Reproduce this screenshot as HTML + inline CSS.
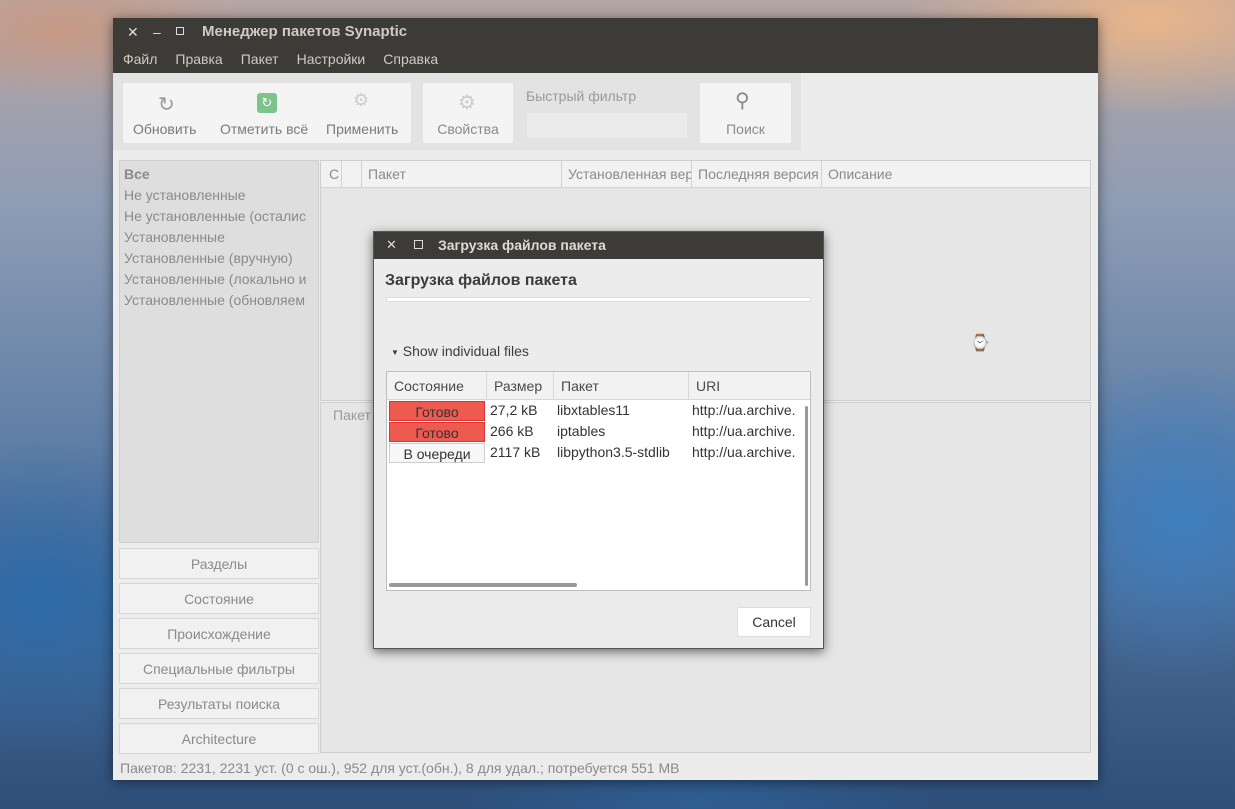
<!DOCTYPE html><html><head><meta charset="utf-8"><style>
*{box-sizing:border-box;margin:0;padding:0}
body{width:1235px;height:809px;overflow:hidden;position:relative;font-family:"Liberation Sans","DejaVu Sans",sans-serif;font-size:14px;color:#7a7a7a;
background:
radial-gradient(ellipse 300px 120px at 1150px 20px,#e9b58a 0%,transparent 80%),
radial-gradient(ellipse 200px 80px at 60px 30px,#c89a86 0%,transparent 90%),
radial-gradient(ellipse 250px 200px at 40px 600px,#2c6aa8 0%,transparent 80%),
radial-gradient(ellipse 200px 200px at 1180px 520px,#3e7fbf 0%,transparent 80%),
radial-gradient(ellipse 300px 120px at 700px 800px,#2f5e93 0%,transparent 80%),
linear-gradient(180deg,#b7a6a3 0%,#8f9db5 25%,#5f7ea6 55%,#2e4f7a 100%)}
.abs{position:absolute}
.win{left:113px;top:18px;width:985px;height:762px;background:#ececec;box-shadow:0 2px 12px rgba(0,0,0,.5)}
.tb{left:0;top:0;width:985px;height:55px;background:#3c3b37;color:#dfdbd2}
.menu span{margin-right:18px}
.btn{background:#f4f4f4;border-radius:2px;text-align:center;color:#8a8a8a}
.side{background:#dedede;border:1px solid #cfcfcf}
.sb{left:6px;width:200px;height:31px;background:#f1f1f1;border:1px solid #d6d6d6;text-align:center;line-height:30px;color:#8a8a8a}
.dlg{left:373px;top:231px;width:451px;height:418px;background:#ececec;box-shadow:0 3px 10px rgba(0,0,0,.55);border:1px solid #555}
.st{position:absolute;left:2px;width:96px;height:20px;text-align:center;line-height:20px;color:#333}
.row{position:absolute;left:0;width:424px;height:21px;color:#333;font-size:14px}
</style></head><body>
<div class="abs win">
 <div class="abs tb">
  <div class="abs" style="left:14px;top:6px;font-size:14px;color:#ddd">✕</div>
  <div class="abs" style="left:40px;top:6px;color:#ddd">–</div>
  <div class="abs" style="left:63px;top:9px;width:8px;height:8px;border:1.5px solid #ddd"></div>
  <div class="abs" style="left:89px;top:5px;font-weight:bold;font-size:15px;color:#cfcbc2">Менеджер пакетов Synaptic</div>
  <div class="abs menu" style="left:10px;top:33px;font-size:14px;color:#cfcbc2"><span>Файл</span><span>Правка</span><span>Пакет</span><span>Настройки</span><span>Справка</span></div>
 </div>
 <div class="abs" style="left:0;top:55px;width:688px;height:77px;background:#e3e3e3"></div>
 <div class="abs btn" style="left:10px;top:65px;width:288px;height:60px"></div>
 <div class="abs" style="left:20px;top:103px">Обновить</div>
 <div class="abs" style="left:107px;top:103px">Отметить всё</div>
 <div class="abs" style="left:213px;top:103px">Применить</div>
 <div class="abs" style="left:45px;top:74px;font-size:20px;color:#999">↻</div>
 <div class="abs" style="left:144px;top:75px;width:20px;height:20px;background:#7cc48c;border-radius:3px;color:#fff;text-align:center;font-size:13px;line-height:20px">↻</div>
 <div class="abs" style="left:240px;top:72px;font-size:18px;color:#ccc">⚙</div>
 <div class="abs btn" style="left:310px;top:65px;width:90px;height:60px;padding-top:38px">Свойства</div>
 <div class="abs" style="left:345px;top:72px;font-size:20px;color:#ccc">⚙</div>
 <div class="abs" style="left:413px;top:70px;color:#9a9a9a">Быстрый фильтр</div>
 <div class="abs" style="left:414px;top:95px;width:160px;height:25px;background:#ebebeb"></div>
 <div class="abs btn" style="left:587px;top:65px;width:91px;height:60px;padding-top:38px">Поиск</div>
 <div class="abs" style="left:622px;top:70px;font-size:20px;color:#888">⚲</div>
 <div class="abs side" style="left:6px;top:142px;width:200px;height:383px;padding:3px 4px;line-height:21px;color:#8a8a8a;white-space:nowrap;overflow:hidden">
  <b>Все</b><br>Не установленные<br>Не установленные (осталис<br>Установленные<br>Установленные (вручную)<br>Установленные (локально и<br>Установленные (обновляем
 </div>
 <div class="abs sb" style="top:530px">Разделы</div>
 <div class="abs sb" style="top:565px">Состояние</div>
 <div class="abs sb" style="top:600px">Происхождение</div>
 <div class="abs sb" style="top:635px">Специальные фильтры</div>
 <div class="abs sb" style="top:670px">Результаты поиска</div>
 <div class="abs sb" style="top:705px">Architecture</div>
 <div class="abs" style="left:207px;top:142px;width:771px;height:241px;background:#e6e6e6;border:1px solid #cfcfcf"></div>
 <div class="abs" style="left:208px;top:143px;width:769px;height:27px;background:#f2f2f2;border-bottom:1px solid #d3d3d3;line-height:27px;color:#8a8a8a;white-space:nowrap;overflow:hidden">
  <span class="abs" style="left:8px">С</span><span class="abs" style="left:20px;top:0;height:27px;border-left:1px solid #d3d3d3"></span><span class="abs" style="left:40px;top:0;height:27px;border-left:1px solid #d3d3d3"></span>
  <span class="abs" style="left:47px">Пакет</span><span class="abs" style="left:240px;top:0;height:27px;border-left:1px solid #d3d3d3"></span>
  <span class="abs" style="left:247px;width:123px;overflow:hidden">Установленная версия</span><span class="abs" style="left:370px;top:0;height:27px;border-left:1px solid #d3d3d3"></span>
  <span class="abs" style="left:377px;width:122px;overflow:hidden">Последняя версия</span><span class="abs" style="left:500px;top:0;height:27px;border-left:1px solid #d3d3d3"></span>
  <span class="abs" style="left:507px">Описание</span>
 </div>
 <div class="abs" style="left:207px;top:384px;width:771px;height:351px;background:#e6e6e6;border:1px solid #cfcfcf;padding:4px 12px;color:#9a9a9a">Пакет</div>
 <div class="abs" style="left:7px;top:742px;font-size:14px;color:#8a8a8a">Пакетов: 2231, 2231 уст. (0 с ош.), 952 для уст.(обн.), 8 для удал.; потребуется 551 MB</div>
</div>
<div class="abs" style="left:970px;top:333px;font-size:16px;color:#666">⌚</div>
<div class="abs dlg">
 <div class="abs" style="left:0;top:0;width:449px;height:27px;background:#3c3b37;color:#dfdbd2">
  <span class="abs" style="left:12px;top:5px;font-size:13px">✕</span>
  <span class="abs" style="left:40px;top:8px;width:9px;height:9px;border:1.5px solid #ddd"></span>
  <span class="abs" style="left:64px;top:5px;font-weight:bold;font-size:14px">Загрузка файлов пакета</span>
 </div>
 <div class="abs" style="left:11px;top:40px;font-weight:bold;font-size:16px;color:#3c3c3c">Загрузка файлов пакета</div>
 <div class="abs" style="left:12px;top:65px;width:425px;height:5px;background:#fff;border:1px solid #ddd"></div>
 <div class="abs" style="left:17px;top:111px;color:#3c3c3c;font-size:14px"><span style="font-size:8px;vertical-align:middle">▼</span> Show individual files</div>
 <div class="abs" style="left:12px;top:139px;width:425px;height:220px;background:#fff;border:1px solid #bdbdbd;overflow:hidden">
  <div class="abs" style="left:0;top:0;width:425px;height:28px;background:#f2f2f2;border-bottom:1px solid #d8d8d8;color:#4a4a4a;line-height:28px">
   <span class="abs" style="left:7px">Состояние</span><span class="abs" style="left:99px;height:28px;border-left:1px solid #d8d8d8"></span>
   <span class="abs" style="left:107px">Размер</span><span class="abs" style="left:166px;height:28px;border-left:1px solid #d8d8d8"></span>
   <span class="abs" style="left:174px">Пакет</span><span class="abs" style="left:301px;height:28px;border-left:1px solid #d8d8d8"></span>
   <span class="abs" style="left:309px">URI</span>
  </div>
  <div class="row" style="top:29px"><div class="st" style="background:#ef5a50;border:1px solid #d33">Готово</div><span class="abs" style="left:103px;top:1px">27,2 kB</span><span class="abs" style="left:170px;top:1px">libxtables11</span><span class="abs" style="left:305px;top:1px">http://ua.archive.</span></div>
  <div class="row" style="top:50px"><div class="st" style="background:#ef5a50;border:1px solid #d33">Готово</div><span class="abs" style="left:103px;top:1px">266 kB</span><span class="abs" style="left:170px;top:1px">iptables</span><span class="abs" style="left:305px;top:1px">http://ua.archive.</span></div>
  <div class="row" style="top:71px"><div class="st" style="background:#f7f7f7;border:1px solid #ccc">В очереди</div><span class="abs" style="left:103px;top:1px">2117 kB</span><span class="abs" style="left:170px;top:1px">libpython3.5-stdlib</span><span class="abs" style="left:305px;top:1px">http://ua.archive.</span></div>
  <div class="abs" style="left:418px;top:34px;width:3px;height:180px;background:#999;border-radius:2px"></div>
  <div class="abs" style="left:2px;top:211px;width:188px;height:4px;background:#999;border-radius:2px"></div>
 </div>
 <div class="abs" style="left:363px;top:375px;width:74px;height:30px;background:#fff;border:1px solid #ddd;border-radius:2px;text-align:center;line-height:28px;color:#333">Cancel</div>
</div>
</body></html>
